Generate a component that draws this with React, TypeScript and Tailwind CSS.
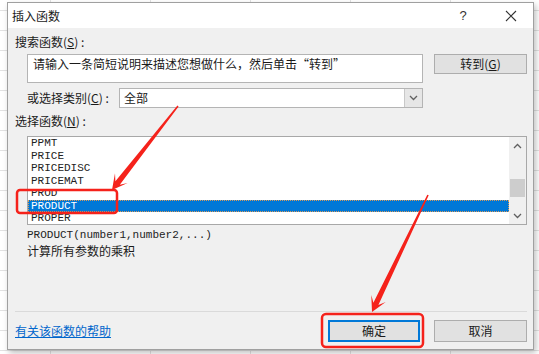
import React from "react";

function arrowPoints(sx: number, sy: number, tx: number, ty: number) {
  const dx = tx - sx;
  const dy = ty - sy;
  const len = Math.hypot(dx, dy);
  const ux = dx / len;
  const uy = dy / len;
  const nx = -uy;
  const ny = ux;
  const Hb = 9;
  const Hw = 15;
  const W = 8;
  const w0 = 0.8;
  const w1 = 2.8;
  const bx = tx - ux * Hb;
  const by = ty - uy * Hb;
  const wx = tx - ux * Hw;
  const wy = ty - uy * Hw;
  const pts = [
    [sx + nx * w0, sy + ny * w0],
    [bx + nx * w1, by + ny * w1],
    [wx + nx * W, wy + ny * W],
    [tx, ty],
    [wx - nx * W, wy - ny * W],
    [bx - nx * w1, by - ny * w1],
    [sx - nx * w0, sy - ny * w0],
  ];
  return pts.map((p) => `${p[0].toFixed(1)},${p[1].toFixed(1)}`).join(" ");
}

const items = ["PPMT", "PRICE", "PRICEDISC", "PRICEMAT", "PROD", "PRODUCT", "PROPER"];

function Chevron({ up }: { up?: boolean }) {
  return (
    <svg width="9" height="6" viewBox="0 0 9 6">
      {up ? (
        <polyline points="1,5 4.5,1.5 8,5" fill="none" stroke="#606060" strokeWidth="1.3" />
      ) : (
        <polyline points="1,1 4.5,4.5 8,1" fill="none" stroke="#606060" strokeWidth="1.3" />
      )}
    </svg>
  );
}

export default function App() {
  const cjk = "font-['Microsoft_YaHei','Noto_Sans_CJK_SC',sans-serif]";
  return (
    <div
      className={`relative w-[539px] h-[354px] overflow-hidden bg-white ${cjk} text-[12px] text-[#1a1a1a] bg-[linear-gradient(#e2e2e2_1px,transparent_1px),linear-gradient(90deg,#e2e2e2_1px,transparent_1px)] bg-[size:100%_20px,100px_100%] bg-[position:0_10px,50px_0]`}
    >
      <div className="pt-[2px] pl-[7px]">
        <div className="w-[527px] h-[348px] border border-[#a0a0a0] bg-[#f0f0f0] shadow-[2px_3px_6px_rgba(0,0,0,0.25)] flex flex-col">
          {/* Title bar */}
          <div className="h-[25px] bg-white flex items-center pl-[4px] shrink-0">
            <span className="text-[12px] leading-none">插入函数</span>
            <span className="ml-auto w-[20px] text-center text-[13px] leading-none text-[#333] font-['Liberation_Sans',sans-serif]">?</span>
            <span className="ml-[28px] mr-[12px] w-[20px] flex justify-center">
              <svg width="12" height="12" viewBox="0 0 12 12">
                <path d="M1 1 L11 11 M11 1 L1 11" stroke="#333" strokeWidth="1.1" />
              </svg>
            </span>
          </div>

          {/* Body */}
          <div className="flex-1 flex flex-col">
            <div className="mt-[6px] ml-[7px] leading-[16px]">
              搜索函数(<u>S</u>) :
            </div>
            <div className="mt-[4px] ml-[19px] flex items-start">
              <div className="w-[396px] h-[29px] bg-white border border-[#b4b4b4] pl-[5px] pt-[1px] leading-[16px]">
                请输入一条简短说明来描述您想做什么，然后单击“转到”
              </div>
              <div className="ml-[11px] w-[93px] h-[20px] bg-[#e1e1e1] border border-[#adadad] flex items-center justify-center leading-none">
                转到(<u>G</u>)
              </div>
            </div>
            <div className="mt-[5px] ml-[19px] flex items-center h-[20px]">
              <div className="w-[92px] leading-[16px]">
                或选择类别(<u>C</u>) :
              </div>
              <div className="w-[304px] h-[20px] bg-white border border-[#b4b4b4] flex items-stretch">
                <div className="flex-1 pl-[4px] flex items-center leading-none">全部</div>
                <div className="w-[18px] bg-[#e6e6e6] border-l border-[#c8c8c8] flex items-center justify-center">
                  <Chevron />
                </div>
              </div>
            </div>
            <div className="mt-[5px] ml-[7px] leading-[16px]">
              选择函数(<u>N</u>) :
            </div>
            <div className="mt-[7px] ml-[19px] w-[500px] h-[89px] bg-white border border-[#a8a8a8] flex overflow-hidden">
              <div className="flex-1 font-['Liberation_Mono',monospace] text-[11px] text-[#222]">
                {items.map((it) =>
                  it === "PRODUCT" ? (
                    <div
                      key={it}
                      className="h-[12.5px] leading-[11px] pl-[2px] bg-[#0078d7] text-white border border-dotted border-[#d89a5a]"
                    >
                      {it}
                    </div>
                  ) : (
                    <div key={it} className="h-[12.5px] leading-[12.5px] pl-[3px]">
                      {it}
                    </div>
                  )
                )}
              </div>
              <div className="w-[17px] bg-[#f0f0f0] flex flex-col items-center">
                <div className="h-[17px] flex items-center justify-center">
                  <Chevron up />
                </div>
                <div className="mt-[25px] w-[15px] h-[18px] bg-[#cdcdcd]" />
                <div className="mt-auto h-[17px] flex items-center justify-center">
                  <Chevron />
                </div>
              </div>
            </div>
            <div className="mt-[2px] ml-[19px] leading-[16px] font-['Liberation_Mono',monospace] text-[11px] text-[#222]">
              PRODUCT(number1,number2,...)
            </div>
            <div className="ml-[19px] leading-[16px]">计算所有参数的乘积</div>

            <div className="mt-[52px] ml-[7px] mr-[6px] h-[1px] bg-[#dadada]" />

            <div className="mt-[8px] ml-[7px] mr-[6px] flex items-center">
              <span className="text-[#0066cc] underline leading-[16px]">有关该函数的帮助</span>
              <div className="ml-auto w-[92px] h-[22px] bg-[#e1e1e1] border border-[#0078d7] shadow-[inset_0_0_0_1px_#0078d7] flex items-center justify-center leading-none">
                确定
              </div>
              <div className="ml-[14px] w-[93px] h-[22px] bg-[#e1e1e1] border border-[#adadad] flex items-center justify-center leading-none">
                取消
              </div>
            </div>
          </div>
        </div>
      </div>

      {/* Red annotations overlay */}
      <svg className="absolute left-0 top-0 pointer-events-none" width="539" height="354" viewBox="0 0 539 354">
        <rect x="17" y="190" width="100" height="23" rx="3" fill="none" stroke="#f5221b" strokeWidth="2.5" />
        <rect x="322" y="314" width="101" height="33" rx="4" fill="none" stroke="#f5221b" strokeWidth="2.5" />
        <polygon points={arrowPoints(178, 106, 112, 190)} fill="#f5221b" />
        <polygon points={arrowPoints(428, 195, 372, 312)} fill="#f5221b" />
      </svg>
    </div>
  );
}
